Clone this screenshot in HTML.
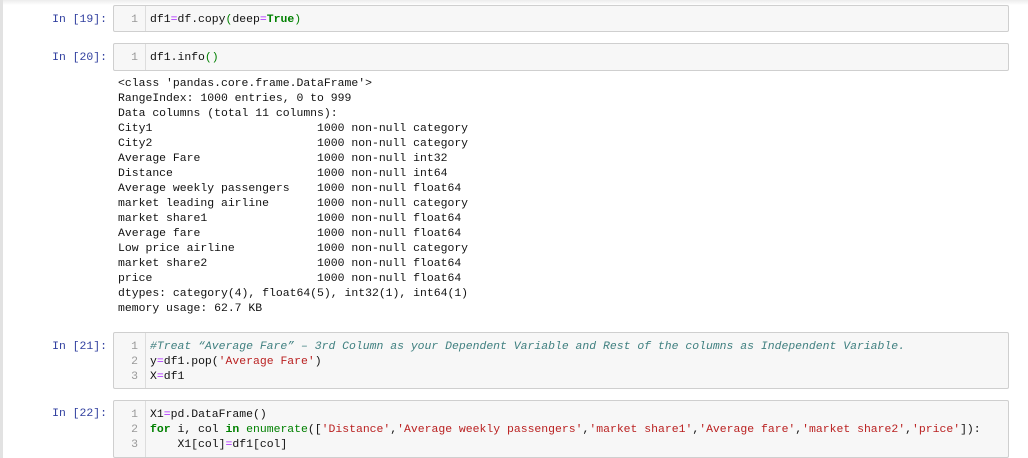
<!DOCTYPE html><html><head><style>
body{margin:0;width:1028px;height:458px;background:#fff;position:relative;overflow:hidden;font-family:"Liberation Mono","DejaVu Sans Mono",monospace;font-size:11.45px;color:#111}
.lb{position:absolute;left:0;top:0;width:3px;height:458px;background:#e2e2e2}
.tg{position:absolute;left:3px;top:0;right:0;height:5px;background:linear-gradient(#ececec,#fff)}
.p{position:absolute;left:40px;width:67px;text-align:right;color:#303f9f;white-space:pre}
.box{position:absolute;left:113px;width:894px;background:#f7f7f7;border:1px solid #cfcfcf;border-radius:2px}
.gut{position:absolute;left:0;top:0;bottom:0;width:31px;border-right:1px solid #ddd}
.ln{position:absolute;left:0;width:24px;text-align:right;color:#999;line-height:15px}
.cd{position:absolute;left:36px;white-space:pre;line-height:15px;color:#111}
.o{position:absolute;left:118px;top:76px;white-space:pre;line-height:15px}
.k{color:#008000;font-weight:bold}.e{color:#aa22ff}.s{color:#ba2121}.c{color:#408080;font-style:italic}.g{color:#008000}
</style></head><body>
<div class="lb"></div><div class="tg"></div>
<div class="p" style="top:13px">In [19]:</div>
<div class="box" style="top:5px;height:25px"><div class="gut"></div><div class="ln" style="top:6px">1</div><div class="cd" style="top:6px">df1<span class="e">=</span>df.copy<span class="g">(</span>deep<span class="e">=</span><span class="k">True</span><span class="g">)</span></div></div>
<div class="p" style="top:51px">In [20]:</div>
<div class="box" style="top:43px;height:26px"><div class="gut"></div><div class="ln" style="top:6px">1</div><div class="cd" style="top:6px">df1.info<span class="g">()</span></div></div>
<div class="o">&lt;class 'pandas.core.frame.DataFrame'&gt;
RangeIndex: 1000 entries, 0 to 999
Data columns (total 11 columns):
City1                        1000 non-null category
City2                        1000 non-null category
Average Fare                 1000 non-null int32
Distance                     1000 non-null int64
Average weekly passengers    1000 non-null float64
market leading airline       1000 non-null category
market share1                1000 non-null float64
Average fare                 1000 non-null float64
Low price airline            1000 non-null category
market share2                1000 non-null float64
price                        1000 non-null float64
dtypes: category(4), float64(5), int32(1), int64(1)
memory usage: 62.7 KB</div>
<div class="p" style="top:340px">In [21]:</div>
<div class="box" style="top:332px;height:55px"><div class="gut"></div><div class="ln" style="top:6px">1<br>2<br>3</div><div class="cd" style="top:6px"><span class="c">#Treat “Average Fare” – 3rd Column as your Dependent Variable and Rest of the columns as Independent Variable.</span>
y<span class="e">=</span>df1.pop(<span class="s">'Average Fare'</span>)
X<span class="e">=</span>df1</div></div>
<div class="p" style="top:407px">In [22]:</div>
<div class="box" style="top:400px;height:56px"><div class="gut"></div><div class="ln" style="top:6px">1<br>2<br>3</div><div class="cd" style="top:6px">X1<span class="e">=</span>pd.DataFrame()
<span class="k">for</span> i, col <span class="k">in</span> <span class="g">enumerate</span>([<span class="s">'Distance'</span>,<span class="s">'Average weekly passengers'</span>,<span class="s">'market share1'</span>,<span class="s">'Average fare'</span>,<span class="s">'market share2'</span>,<span class="s">'price'</span>]):
    X1[col]<span class="e">=</span>df1[col]</div></div>
</body></html>
